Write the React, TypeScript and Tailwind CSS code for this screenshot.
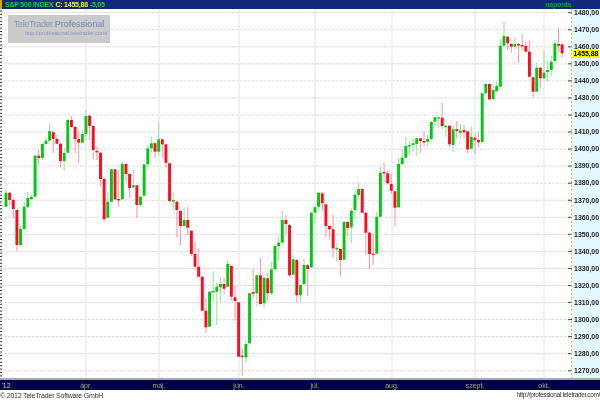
const G = 1, R = 0;
// [colour, wickTop, bodyTop, bodyBottom, wickBottom]
const candles: number[][] = [
[G,189,192.7,206.7,207],[R,192,192.7,200,205],[R,199,200,209,218],[R,209,210,245,250.7],[G,225,229,245,246],
[G,202,206.7,229,230],[G,192,198,207,208],[G,195,197,199,200],[G,155,155.7,196.7,197],[R,150,155.7,158,166],
[G,143,144,158,160],[G,137,140.7,144,145],[G,124,131,140.7,141],[R,131,132,139,152.7],[R,135,139,143.7,144],
[R,143,143.7,161,167.7],[G,148,153,161,170.7],[G,119,120,152.7,153],[R,116,120,127,128],[R,126,127,139,152.7],
[R,130,139,142.7,162.7],[G,130,134,142.7,143],[G,110,116,134,140],[R,115,115.7,126,140],[R,125,126,150,159],
[R,146.7,151,152.3,160],[R,152,152.7,179,186],[R,177,179,219.3,221.7],[G,191.7,201.7,217.7,218],[G,169,169.3,201.7,202],
[R,169,169.3,199.3,200],[R,170,199,200,206.7],[G,161.7,164,199.3,200],[R,163,164,174,181.7],[R,173,174,188,198],
[G,170,185.3,187.3,188],[R,185,185.3,205,218],[G,196,196.7,205,206],[G,164,164.3,195.7,196],[G,145,148.3,164.3,169],
[G,136.7,143.3,148.3,152],[R,143,143.3,151.7,158],[G,121.7,139.3,151.7,155.7],[R,139,139.3,144.3,158],[R,144,144.3,162.7,167.7],
[R,163,163.3,201,202],[G,193,200,201.7,210],[R,201,201.7,210,237.3],[R,210,211,226,245],[G,207.3,220,226,227],
[R,207.3,220,227.7,235],[R,230,230.7,254,256],[R,242,254,266.7,270],[R,248,266.7,276.7,277],[R,276,276.7,310.7,311],
[R,298,310.7,327.3,332.7],[G,291,291.7,326.7,327],[G,270.7,291,292,301.7],[G,283,286.7,291.7,325],[G,277.7,284,287.3,301.7],
[R,277.7,284,288.7,294],[G,260,264,286.7,287],[R,265,266,296.7,300.7],[R,286,297.3,301,321],[R,302,302.3,356.7,357],
[R,349,355.7,357,375.7],[G,340,344,357.3,363],[G,293,293.3,343.3,344],[R,269.3,292,293.7,298],[G,275,275.3,293.3,306],
[R,258,275.3,304,305],[G,277,277.7,303.3,307.7],[R,272.7,278.3,293.3,301.7],[G,261.7,269.3,293.3,295],[G,245,246,269.3,270],
[G,236.7,242.7,246,260.7],[G,211,220,242.7,243],[R,215,220,224,235],[R,224,225,275.3,277],[G,255,259.3,274.7,275],
[R,259,260,295.3,302.7],[G,284,285,295.3,301.7],[G,258,265,284,285],[R,264,265.3,269,296],[G,212,212.7,267.3,268],
[G,206,207.3,212.7,223.3],[G,191.7,192.7,206.7,211],[R,192,193.3,203.3,211],[R,204,204.3,226,236.7],[R,225,226,229.3,239.3],
[R,214.3,229.3,248.3,257.3],[G,242.7,248,249.3,261.7],[R,248,249,260,276],[G,220.7,222,259.7,260],[R,221,222,228,236],
[G,208.3,210.7,227.3,242.7],[G,190,194.7,210,219],[G,182.3,189,195,198.3],[R,188,189,212.7,213],[R,212,212.7,232.7,255],
[R,232,232.7,254,269.3],[R,233,253.7,254.7,265],[G,211.7,216.7,253.7,254],[G,166.7,172.7,216.7,217],[R,162.7,172,173.3,181.7],
[R,170.7,173.3,183.3,184],[R,174,184,190.7,194],[R,191,191.3,207.7,226],[G,158.3,164,207.3,208],[G,149.3,157.7,164,165],
[G,136.7,146,157.7,158],[G,140.7,145,146.3,155],[G,138.3,143.3,145,151.7],[G,137.3,138.3,144,155.7],[R,138,138.3,141,153.3],
[R,130.7,141,141.7,146.7],[G,135,139,141.7,146],[G,121,122,139,140],[G,116.7,117.3,121.7,125],[G,117,117.3,118,127.3],
[R,102.7,117.7,126,129.3],[G,125,125.7,126.3,136.7],[R,125,125.7,144.3,147.3],[G,125,129.3,145,151.7],[R,121,129.3,131,138.3],
[G,124,130.7,132.7,138.3],[R,125,130,132.3,138.3],[R,131,131.3,149.3,153.3],[G,126.7,136.7,148.7,149],[R,133.3,137.7,140,154.3],
[R,131.7,140,142.3,147.3],[G,93,93.3,142,142.5],[G,83,84,93.3,94],[R,83.5,84,99.3,100],[G,84,90,99,100],
[G,81.7,86,91,92],[G,39.3,45.7,86.7,87],[G,21,36,45.7,46],[R,36,36.7,43.3,50],[R,43,44,46.7,52.7],
[G,37.3,44,46.7,50],[R,43,44,45.3,62.7],[R,34,45,45.7,50],[R,41.7,46,51.7,52],[R,40.7,51.7,76.7,77],
[R,77,77.3,91.7,97.3],[G,62.7,67.7,91.7,92],[R,67,67.7,78.3,88.3],[G,50.7,72.7,78.3,79],[G,60.7,70,72,81.7],
[G,55.7,61.7,70,76.7],[G,40,43.3,61,62],[R,27.3,44,45.7,51.7],[R,44,44.3,53.3,57.7],
];

const prices = [1480,1470,1460,1450,1440,1430,1420,1410,1400,1390,1380,1370,1360,1350,1340,1330,1320,1310,1300,1290,1280,1270];
const gridX = [86,159,239,315,392,475,544];

function Chart() {
  return (
    <svg className="block w-[572px] h-[369px]" viewBox="0 9 572 369">
      {prices.map((_, i) => {
        const y = 12.7 + 17.05 * i;
        return <line key={i} x1={0} x2={572} y1={y} y2={y} stroke="#dedede" strokeWidth={1} strokeDasharray="3 1" />;
      })}
      {gridX.map((x) => (
        <line key={x} x1={x} x2={x} y1={9} y2={378} stroke="#e2e2e2" strokeWidth={1} />
      ))}
      {Array.from({ length: 108 }).map((_, i) => (
        <line key={i} x1={0} x2={2} y1={11 + i * 3.41} y2={11 + i * 3.41} stroke="#333" strokeWidth={1} />
      ))}
      {candles.map(([c, wt, bt, bb, wb], i) => {
        const x = 6 + 3.635 * i;
        return (
          <g key={i}>
            <line x1={x} x2={x} y1={wt} y2={wb} stroke={c ? "#9ce79c" : "#ff9ca8"} strokeWidth={1.1} />
            <rect x={x - 1.45} y={bt} width={2.9} height={Math.max(bb - bt, 1.4)} fill={c ? "#00c814" : "#ff0a1e"} />
          </g>
        );
      })}
      {prices.map((_, i) => {
        const y = 12.7 + 17.05 * i;
        return <line key={i} x1={568} x2={572} y1={y} y2={y} stroke="#444" strokeWidth={1} />;
      })}
      <line x1={571.5} x2={571.5} y1={9} y2={378} stroke="#e0c040" strokeWidth={1} strokeDasharray="2 2" />
    </svg>
  );
}

export default function App() {
  return (
    <div className="w-[600px] h-[400px] flex flex-col bg-white overflow-hidden blur-[0.25px] font-['Liberation_Sans',Arial,sans-serif]">
      <div className="h-[9px] flex items-center justify-between bg-[#10277a] text-[7px] tracking-[-0.22px] leading-none font-bold pr-[29px]">
        <div className="flex items-center gap-[2px] h-full">
          <div className="w-[2px] h-full bg-[#f0a000]" />
          <span className="ml-[1px] text-[#18d030]">S&amp;P 500 INDEX</span>
          <span className="text-[#f0f040]">C: 1455,88</span>
          <span className="text-[#18d030]">-5,05</span>
        </div>
        <span className="text-[#00a828]">naponta</span>
      </div>
      <div className="h-[369px] flex relative">
        <Chart />
        <div className="w-[28px] bg-[#e4f8ff] flex flex-col justify-between items-end pb-[3px] pr-[1px] text-[6.9px] leading-[8px] font-bold text-[#222]">
          {prices.map((p) => (
            <span key={p} className="h-[8px]">{p},00</span>
          ))}
        </div>
        <div className="absolute left-[573px] top-[41px] w-[26px] h-[8px] bg-[#ffee00] text-[6.9px] leading-[8px] font-bold text-black text-center">
          1455,88
        </div>
        <div className="absolute left-[8px] top-[6px] w-[102px] h-[28px] bg-[#cacaca] flex flex-col pt-[4px]">
          <div className="pl-[6px] text-[9px] tracking-[-0.4px] leading-[11px] text-[#8a98c0] whitespace-nowrap">
            TeleTrader <span className="font-bold">Professional</span>
          </div>
          <div className="pl-[17px] text-[5.8px] tracking-[-0.1px] leading-[7px] text-[#8a98c0] whitespace-nowrap">http://professional.teletrader.com/</div>
        </div>
      </div>
      <div className="h-[2px] bg-[#aaaaaa]" />
      <div className="h-[10px] flex items-center bg-[#000044] text-[7px] leading-none text-[#a8a878]">
        <span className="w-[10px] ml-[1px] text-center text-[#d0d0b0]">'12</span>
        <span className="w-[30px] ml-[60px] text-center">ápr.</span>
        <span className="w-[30px] ml-[43px] text-center">máj.</span>
        <span className="w-[30px] ml-[50px] text-center">jún.</span>
        <span className="w-[30px] ml-[46px] text-center">júl.</span>
        <span className="w-[30px] ml-[47px] text-center">aug.</span>
        <span className="w-[30px] ml-[53px] text-center">szept.</span>
        <span className="w-[30px] ml-[39px] text-center">okt.</span>
      </div>
      <div className="flex-1 flex items-center justify-between leading-none text-[#333]">
        <span className="text-[7px] tracking-[-0.2px]">© 2012 TeleTrader Software GmbH</span>
        <span className="text-[6.5px] tracking-[-0.36px]">http://professional.teletrader.com/</span>
      </div>
    </div>
  );
}
